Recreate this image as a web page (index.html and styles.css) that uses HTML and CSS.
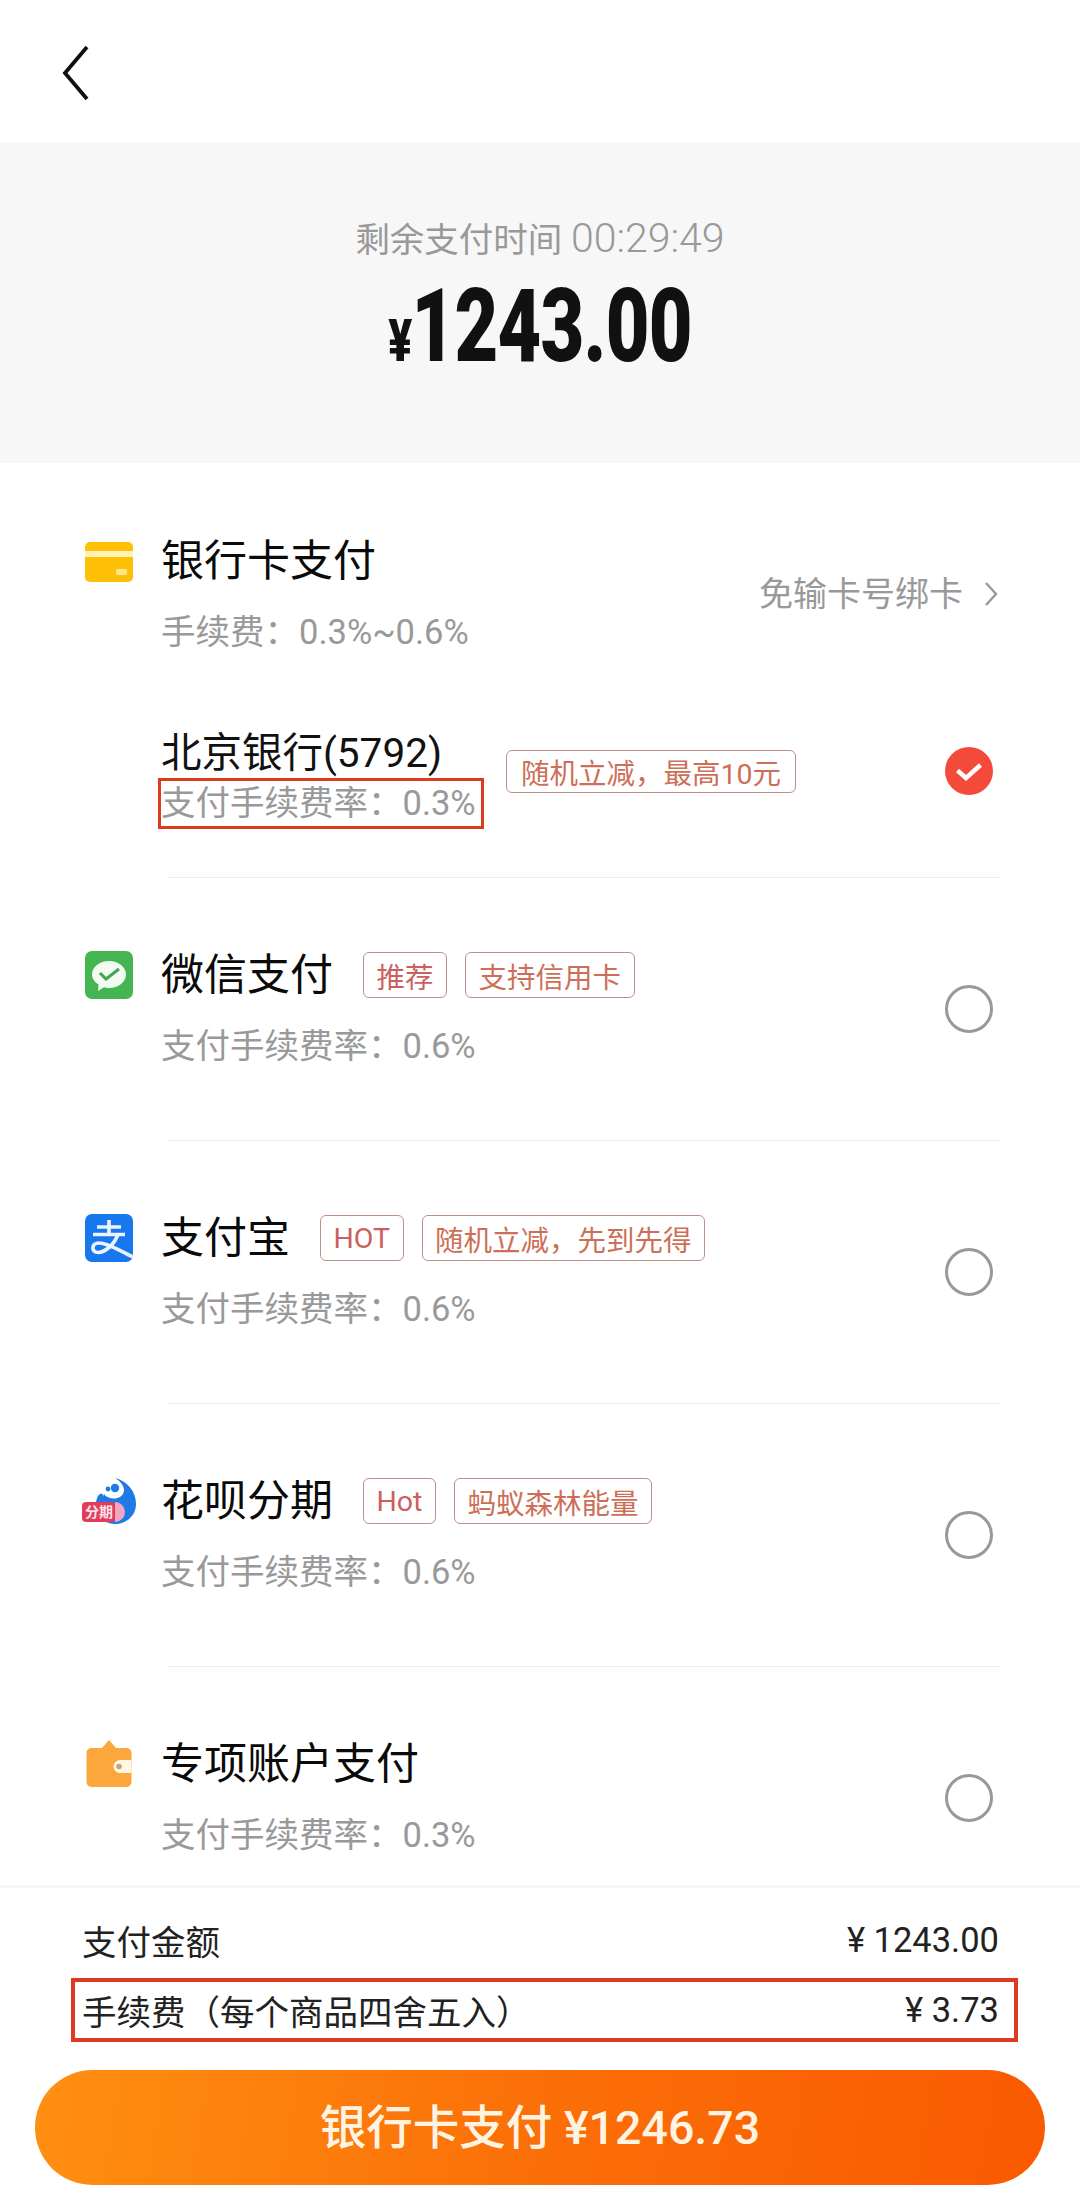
FILE: index.html
```html
<!DOCTYPE html>
<html lang="zh-CN">
<head>
<meta charset="utf-8">
<title>支付</title>
<link rel="stylesheet" href="styles.css">
</head>
<body>
<div class="page">
  <header class="topbar">
    <svg class="back" viewBox="0 0 30 56" width="30" height="56"><path d="M27 2 L5 28 L27 54" fill="none" stroke="#111" stroke-width="3.8"/></svg>
  </header>

  <section class="summary">
    <div class="timer">剩余支付时间 <span class="clock">00:29:49</span></div>
    <div class="amount"><span class="yen">¥</span>1243.00</div>
  </section>

  <main class="list">
    <section class="bank">
      <div class="pay-head">
        <svg class="icon card-icon" viewBox="0 0 48 40" width="48" height="40">
          <rect width="48" height="40" rx="5" fill="#fdc006"/>
          <rect y="9" width="48" height="6" fill="#fff3b8"/>
          <rect x="31" y="27" width="11" height="6" rx="1.5" fill="#ffe68a"/>
        </svg>
        <div class="pay-body">
          <div class="title-row"><span class="title">银行卡支付</span></div>
          <div class="rate">手续费：0.3%~0.6%</div>
        </div>
        <div class="link">免输卡号绑卡
          <svg viewBox="0 0 14 24" width="14" height="24"><path d="M2 1 L12 12 L2 23" fill="none" stroke="#999" stroke-width="2.4"/></svg>
        </div>
      </div>
      <div class="card-row">
        <div class="card-info">
          <div class="card-name">北京银行(5792)</div>
          <div class="mark rate-mark">支付手续费率：0.3%</div>
        </div>
        <span class="tag tag-small">随机立减，最高10元</span>
        <svg class="check" viewBox="0 0 48 48" width="48" height="48"><circle cx="24" cy="24" r="24" fill="#f44a3b"/><path d="M12.5 23.5 L21 31 L35.5 18" fill="none" stroke="#fff" stroke-width="4.4"/></svg>
      </div>
    </section>
    <div class="divider"></div>

    <section class="pay-row">
      <svg class="icon" viewBox="0 0 48 48" width="48" height="48">
        <rect width="48" height="48" rx="7" fill="#45b552"/>
        <path d="M24 10 C33.500 10 41 16 41 23.500 C41 31 33.500 37 24 37 C22 37 20.500 36.800 19 36.300 L13 40 L13.500 33.500 C9.500 31 7 27.500 7 23.500 C7 16 14.500 10 24 10 Z" fill="#f2fbf2"/>
        <path d="M15 22 L21 28 L34 18" fill="none" stroke="#45a352" stroke-width="3"/>
      </svg>
      <div class="pay-body">
        <div class="title-row"><span class="title">微信支付</span><span class="tag tag-rose">推荐</span><span class="tag">支持信用卡</span></div>
        <div class="rate">支付手续费率：0.6%</div>
      </div>
      <span class="radio"></span>
    </section>
    <div class="divider"></div>

    <section class="pay-row">
      <svg class="icon" viewBox="0 0 48 48" width="48" height="48">
        <rect width="48" height="48" rx="7" fill="#1677ee"/>
        <path d="M12 13 H36 M24 6 V20 M8 20.500 H40 M33 20 C30 30 20 38.500 13 38.500 C6 38.500 6 29 14 29 C23 29 33 36 48 43" fill="none" stroke="#eaf3ff" stroke-width="3.700"/>
      </svg>
      <div class="pay-body">
        <div class="title-row"><span class="title">支付宝</span><span class="tag tag-rose">HOT</span><span class="tag">随机立减，先到先得</span></div>
        <div class="rate">支付手续费率：0.6%</div>
      </div>
      <span class="radio"></span>
    </section>
    <div class="divider"></div>

    <section class="pay-row">
      <svg class="icon huabei-icon" viewBox="0 0 54 48" width="54" height="48">
        <path d="M33 1 C46 4 54 15 54 27 C54 39 44 47 33 47 C24 47 18 42 16 34 L22 17 C26 23 40 24 42 14 C42.500 9 38 4 33 1 Z" fill="#1f7ae6"/>
        <circle cx="33" cy="11" r="4.200" fill="#1f7ae6"/>
        <path d="M14 27 C14 22 16 18 18 17 C21 16 22 19 21 22 L19 27 Z" fill="#1f7ae6"/>
        <circle cx="26" cy="12" r="2.400" fill="#1f7ae6"/>
        <rect x="0" y="25" width="33" height="20" rx="4" fill="#e23c5a"/>
        <path d="M33 25 A10 10 0 0 1 33 45" fill="#f3a6c0"/>
        <text class="badge-text" x="17" y="40">分期</text>
      </svg>
      <div class="pay-body">
        <div class="title-row"><span class="title">花呗分期</span><span class="tag tag-rose">Hot</span><span class="tag">蚂蚁森林能量</span></div>
        <div class="rate">支付手续费率：0.6%</div>
      </div>
      <span class="radio"></span>
    </section>
    <div class="divider"></div>

    <section class="pay-row">
      <svg class="icon" viewBox="0 0 48 48" width="48" height="48">
        <path d="M24 0 L31 8 H17 Z" fill="#fba73c"/>
        <rect x="1.500" y="8" width="45" height="39" rx="5" fill="#fba73c"/>
        <path d="M46.500 20 H35 A6.500 6.500 0 0 0 35 33 H46.500 Z" fill="#fff6e8"/>
        <circle cx="34" cy="26.500" r="2.800" fill="#c9a66f"/>
      </svg>
      <div class="pay-body">
        <div class="title-row"><span class="title">专项账户支付</span></div>
        <div class="rate">支付手续费率：0.3%</div>
      </div>
      <span class="radio"></span>
    </section>
  </main>

  <footer class="footer">
    <div class="sum-row"><span>支付金额</span><span>¥ 1243.00</span></div>
    <div class="sum-row mark fee-mark"><span>手续费（每个商品四舍五入）</span><span>¥ 3.73</span></div>
    <button class="pay-btn" type="button">银行卡支付 ¥1246.73</button>
  </footer>
</div>
</body>
</html>
```

FILE: styles.css
```css
* { box-sizing: border-box; }

html, body { margin: 0; padding: 0; background: #fff; }

body {
  font-family: Roboto, "Noto Sans CJK SC", sans-serif;
  color: #111;
}

.page {
  width: 1080px;
  height: 2208px;
  display: flex;
  flex-direction: column;
  overflow: hidden;
}

.topbar {
  height: 142px;
  flex: none;
  padding: 45px 0 0 60px;
}

.back { display: block; }

.summary {
  height: 321px;
  flex: none;
  background: #f7f7f7;
  display: flex;
  flex-direction: column;
  align-items: center;
  padding-top: 72px;
}

.timer {
  font-size: 34.500px;
  line-height: 48px;
  color: #999;
  white-space: nowrap;
}

.clock { font-size: 41px; font-weight: 300; }

.amount {
  margin-top: 2px;
  font-size: 102px;
  line-height: 120px;
  font-weight: 900;
  color: #111;
  transform: scaleX(0.74);
  letter-spacing: -1px;
  white-space: nowrap;
}

.yen { font-size: 60px; font-weight: 900; }

.list {
  flex: 1;
  min-height: 0;
  overflow: hidden;
}

.bank { padding-top: 74px; }

.pay-head, .pay-row {
  display: flex;
  padding: 0 87px 0 85px;
}

.pay-head { align-items: center; padding-right: 82px; }

.pay-head .card-icon {
  align-self: flex-start;
  margin-top: 5px;
}

.pay-row {
  height: 262px;
  align-items: center;
}

.pay-row > .icon { align-self: flex-start; margin-top: 73px; }

.icon { flex: none; display: block; }

.huabei-icon { margin-left: -3px; margin-right: -3px; }

.pay-body {
  flex: 1;
  min-width: 0;
  margin-left: 28px;
}

.pay-row .pay-body { align-self: flex-start; margin-top: 73px; }

.title-row {
  display: flex;
  align-items: center;
  height: 48px;
}

.title {
  font-size: 43px;
  line-height: 48px;
  margin-right: 30px;
  color: #0a0a0a;
}

.rate {
  margin-top: 24px;
  font-size: 34.500px;
  line-height: 46px;
  color: #999;
}

.link {
  display: flex;
  align-items: center;
  gap: 21px;
  font-size: 34px;
  line-height: 46px;
  color: #999;
  margin-bottom: 5px;
}

.card-row {
  display: flex;
  align-items: center;
  margin: 74px 87px 0 158px;
  padding-bottom: 48px;
}

.card-info { flex: none; width: 326px; }

.card-name {
  font-size: 40.500px;
  line-height: 48px;
  padding-left: 3px;
  white-space: nowrap;
}

.mark { border-style: solid; border-color: #de3a1f; }

.rate-mark {
  margin-top: 1px;
  height: 51px;
  border-width: 3px;
  padding-left: 0;
  font-size: 34.500px;
  line-height: 45px;
  color: #999;
  white-space: nowrap;
}

.tag {
  display: inline-flex;
  align-items: center;
  flex: none;
  height: 46px;
  padding: 0 12.500px;
  margin-right: 18px;
  border: 1.5px solid #bd8f89;
  border-radius: 6px;
  font-size: 28.500px;
  color: #cd6f58;
  white-space: nowrap;
}

.tag-rose { color: #cb5f60; }

.tag-small {
  height: 43px;
  padding: 0 14px;
  margin: 0 0 16px 22px;
}

.check { flex: none; margin-left: auto; margin-bottom: 16px; display: block; }

.radio {
  flex: none;
  width: 48px;
  height: 48px;
  border: 3px solid #999;
  border-radius: 50%;
}

.divider {
  height: 1px;
  margin: 0 80px 0 168px;
  background: #eeeeee;
}

.badge-text {
  font-family: "Noto Sans CJK SC", sans-serif;
  font-size: 14px;
  font-weight: 700;
  fill: #fbe3e8;
  text-anchor: middle;
}

.footer {
  flex: none;
  height: 323px;
  border-top: 3px solid #f7f7f7;
  padding-top: 22px;
  background: #fff;
  display: flex;
  flex-direction: column;
}

.sum-row {
  display: flex;
  justify-content: space-between;
  align-items: center;
  height: 60px;
  margin: 0 62px 0 71px;
  padding: 0 19px 0 11px;
  font-size: 34.500px;
  color: #222;
}

.fee-mark {
  height: 64px;
  margin-top: 8px;
  border-width: 4px;
  padding: 0 15px 0 7px;
}

.pay-btn {
  height: 115px;
  margin: 28px 35px 0;
  padding: 0 0 9px;
  border: 0;
  border-radius: 58px;
  background: linear-gradient(100deg, #ff8f12 0%, #fb6f08 50%, #fa5900 100%);
  color: #fff4e2;
  font-family: Roboto, "Noto Sans CJK SC", sans-serif;
  font-size: 46.500px;
  font-weight: 500;
}
```
